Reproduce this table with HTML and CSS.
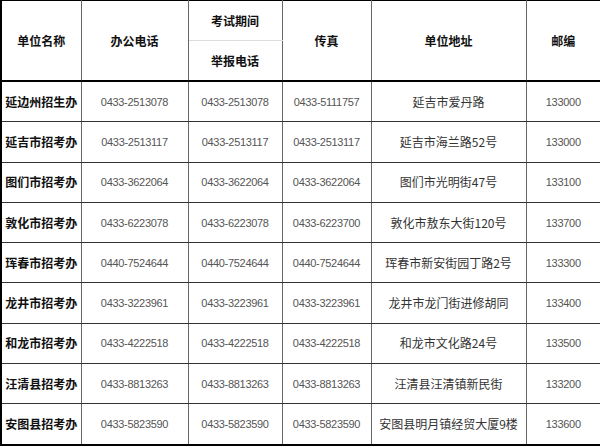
FILE: index.html
```html
<!DOCTYPE html>
<html lang="zh-CN">
<head>
<meta charset="utf-8">
<title>招考办联系方式</title>
<link rel="stylesheet" href="styles.css">
</head>
<body>
<table class="contacts">
  <colgroup>
    <col class="c-name"><col class="c-office"><col class="c-report"><col class="c-fax"><col class="c-addr"><col class="c-zip">
  </colgroup>
  <thead>
    <tr>
      <th rowspan="2">单位名称</th>
      <th rowspan="2">办公电话</th>
      <th class="sub-top">考试期间</th>
      <th rowspan="2">传真</th>
      <th rowspan="2">单位地址</th>
      <th rowspan="2">邮编</th>
    </tr>
    <tr>
      <th class="sub-bottom">举报电话</th>
    </tr>
  </thead>
  <tbody>
    <tr><td class="name">延边州招生办</td><td class="num">0433-2513078</td><td class="num">0433-2513078</td><td class="num">0433-5111757</td><td class="addr">延吉市爱丹路</td><td class="num">133000</td></tr>
    <tr><td class="name">延吉市招考办</td><td class="num">0433-2513117</td><td class="num">0433-2513117</td><td class="num">0433-2513117</td><td class="addr">延吉市海兰路52号</td><td class="num">133000</td></tr>
    <tr><td class="name">图们市招考办</td><td class="num">0433-3622064</td><td class="num">0433-3622064</td><td class="num">0433-3622064</td><td class="addr">图们市光明街47号</td><td class="num">133100</td></tr>
    <tr><td class="name">敦化市招考办</td><td class="num">0433-6223078</td><td class="num">0433-6223078</td><td class="num">0433-6223700</td><td class="addr">敦化市敖东大街120号</td><td class="num">133700</td></tr>
    <tr><td class="name">珲春市招考办</td><td class="num">0440-7524644</td><td class="num">0440-7524644</td><td class="num">0440-7524644</td><td class="addr">珲春市新安街园丁路2号</td><td class="num">133300</td></tr>
    <tr><td class="name">龙井市招考办</td><td class="num">0433-3223961</td><td class="num">0433-3223961</td><td class="num">0433-3223961</td><td class="addr">龙井市龙门街进修胡同</td><td class="num">133400</td></tr>
    <tr><td class="name">和龙市招考办</td><td class="num">0433-4222518</td><td class="num">0433-4222518</td><td class="num">0433-4222518</td><td class="addr">和龙市文化路24号</td><td class="num">133500</td></tr>
    <tr><td class="name">汪清县招考办</td><td class="num">0433-8813263</td><td class="num">0433-8813263</td><td class="num">0433-8813263</td><td class="addr">汪清县汪清镇新民街</td><td class="num">133200</td></tr>
    <tr><td class="name">安图县招考办</td><td class="num">0433-5823590</td><td class="num">0433-5823590</td><td class="num">0433-5823590</td><td class="addr">安图县明月镇经贸大厦9楼</td><td class="num">133600</td></tr>
  </tbody>
</table>
</body>
</html>
```
FILE: styles.css
```css
html, body {
  margin: 0;
  padding: 0;
  background: #fff;
}

.contacts {
  width: 600px;
  table-layout: fixed;
  border-collapse: collapse;
  border-top: 1px solid #000;
  border-left: 2px solid #000;
  border-right: 2px solid #000;
  border-bottom: 2px solid #000;
  font-family: "Noto Sans CJK SC", "Liberation Sans", sans-serif;
  font-size: 12px;
  color: #222;
}

.c-name { width: 80px; }
.c-office { width: 107px; }
.c-report { width: 94px; }
.c-fax { width: 89px; }
.c-addr { width: 155px; }
.c-zip { width: 75px; }

.contacts th,
.contacts td {
  padding: 0;
  text-align: center;
  vertical-align: middle;
  border-left: 1px solid #666;
  border-right: 1px solid #666;
  border-bottom: 1px solid #333;
  line-height: 16px;
}

.contacts th {
  font-weight: bold;
  color: #111;
  height: 40px;
}

.contacts thead tr:last-child th,
.contacts thead th[rowspan] {
  border-bottom: 2px solid #000;
}

.contacts th.sub-top {
  border-bottom: 1px solid #ddd;
  height: 39px;
}

.contacts th.sub-bottom {
  height: 39px;
}

.contacts td {
  height: 39.3px;
}

.contacts td.name {
  font-weight: bold;
  color: #111;
}

.contacts td.num {
  font-family: "Liberation Sans", "DejaVu Sans", sans-serif;
  font-size: 11px;
  letter-spacing: -0.3px;
  color: #555;
}

.contacts td.addr {
  color: #333;
}
```
